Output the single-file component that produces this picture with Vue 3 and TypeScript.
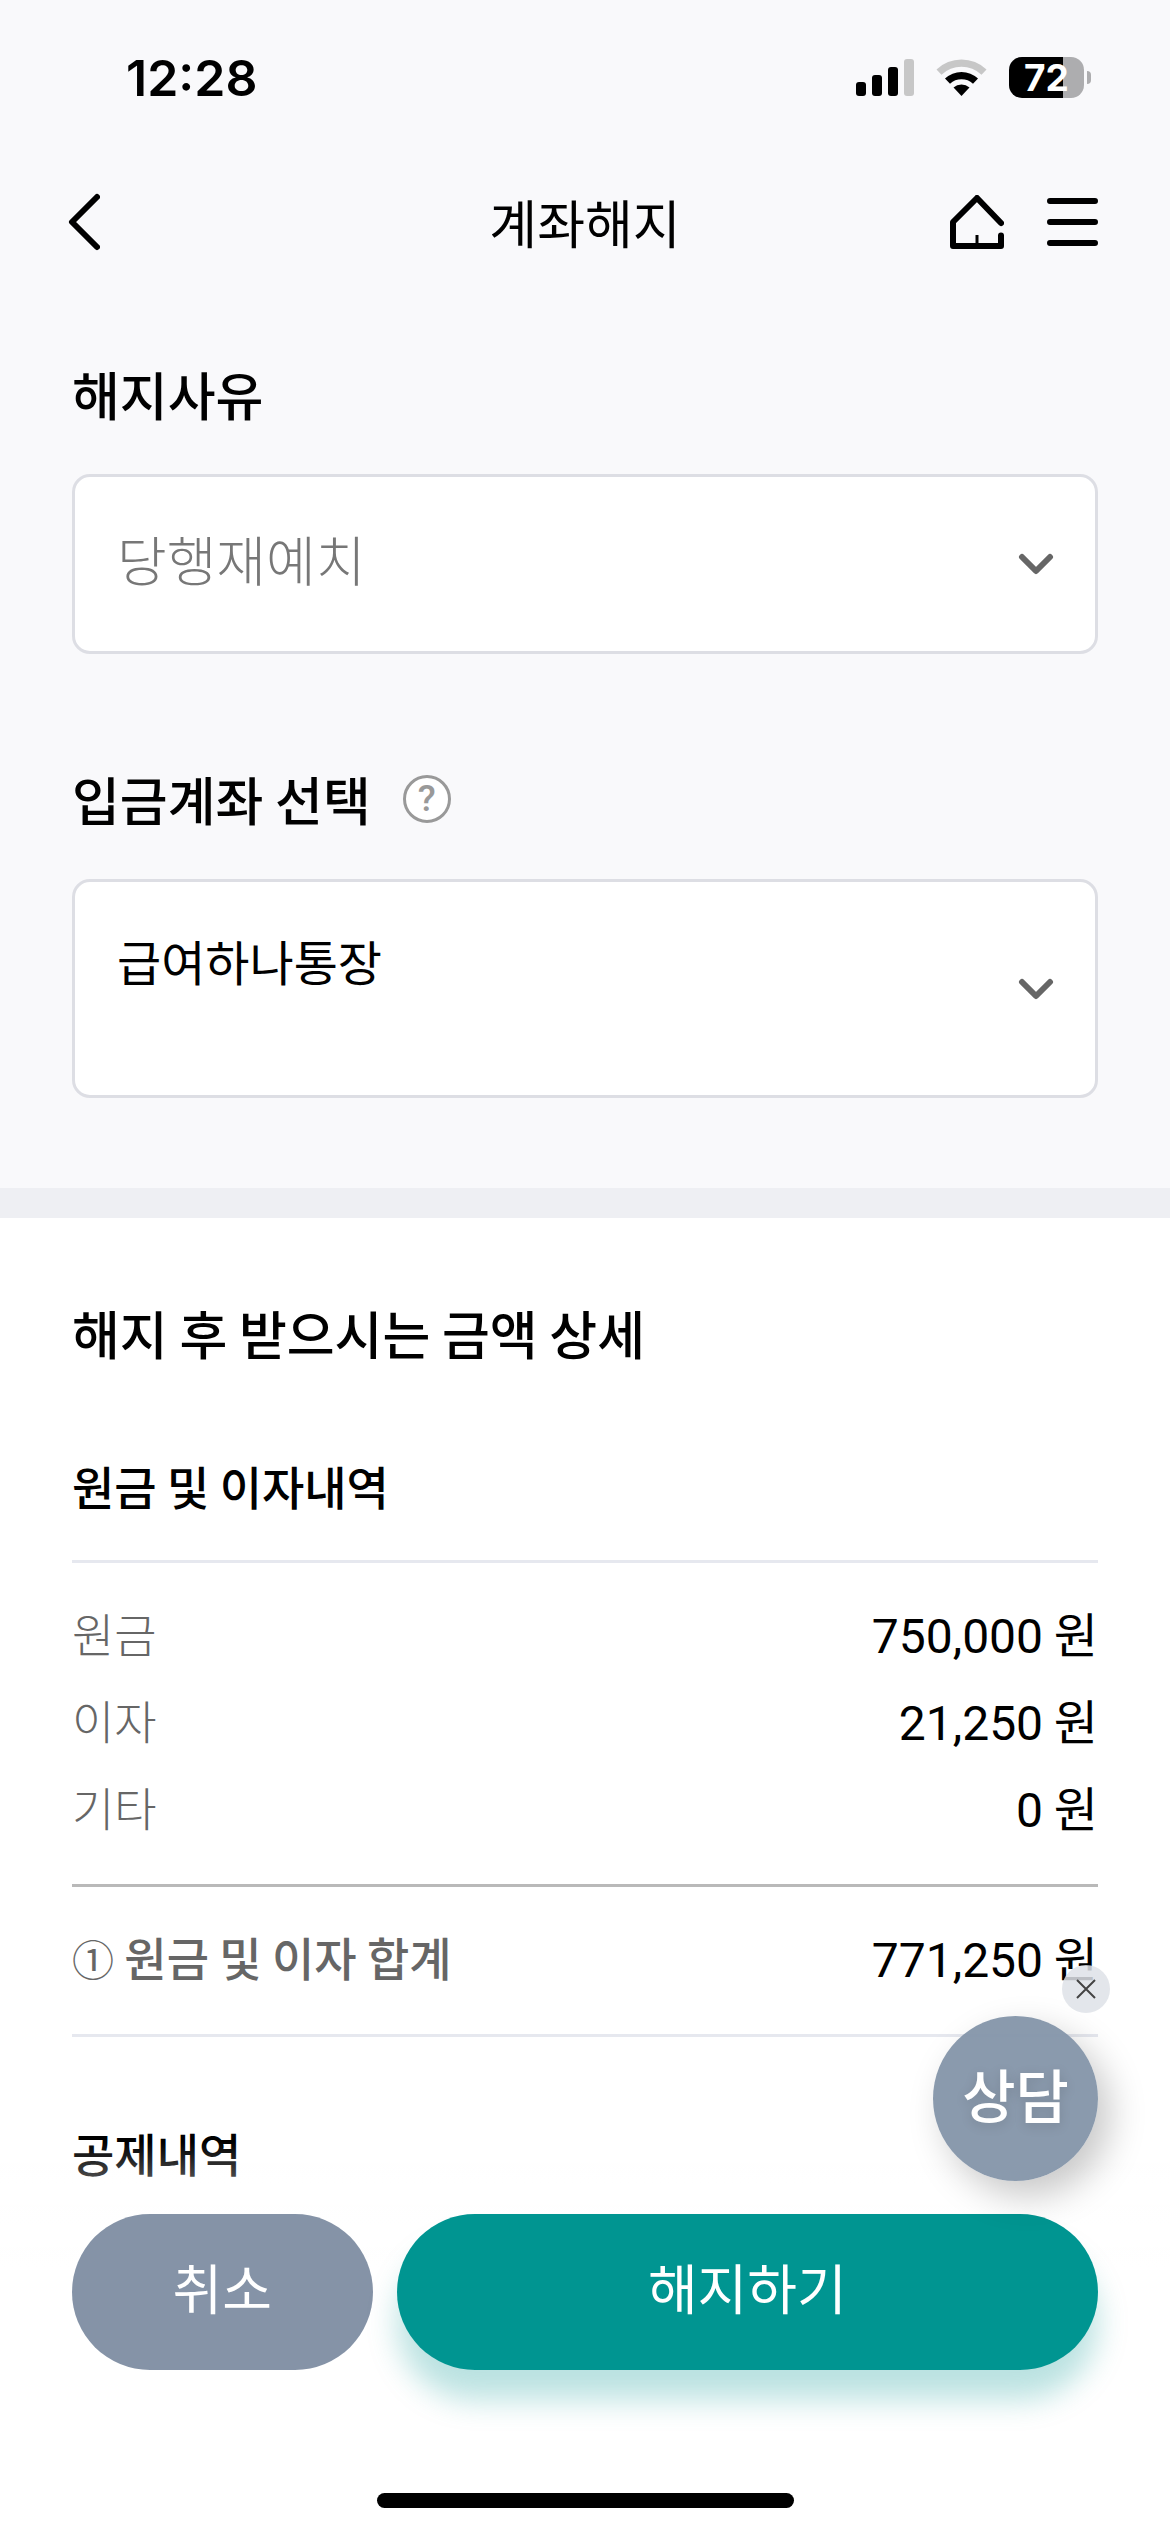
<script setup lang="ts">
import { ref } from 'vue'

interface AmountRow {
  label: string
  amount: number
}

const reason = ref('당행재예치')
const account = ref('급여하나통장')
const showConsult = ref(true)

const rows: AmountRow[] = [
  { label: '원금', amount: 750000 },
  { label: '이자', amount: 21250 },
  { label: '기타', amount: 0 },
]
const total = rows.reduce((sum, row) => sum + row.amount, 0)

const format = (value: number): string => value.toLocaleString('en-US')
</script>

<template>
  <div class="page">
    <div class="status-bar">
      <span class="time">12:28</span>
      <div class="status-icons">
        <svg width="58" height="38" viewBox="0 0 58 38" aria-hidden="true">
          <rect x="0" y="23" width="10" height="14" rx="3" />
          <rect x="16" y="16" width="10" height="21" rx="3" />
          <rect x="32" y="8" width="10" height="29" rx="3" />
          <rect x="48" y="0" width="10" height="37" rx="3" fill="#c7c7c7" />
        </svg>
        <svg width="51" height="38" viewBox="0 0 51 38" aria-hidden="true">
          <path d="M0.5 10.5 A36 36 0 0 1 50.5 10.5 L45.500 15.700 A29 29 0 0 0 5.500 15.700 Z" fill="#c7c7c7" />
          <path d="M9 19.500 A24 24 0 0 1 42 19.500 L37 24.700 A17 17 0 0 0 14 24.700 Z" />
          <path d="M17.500 28.500 A12 12 0 0 1 33.500 28.500 L25.500 37 Z" />
        </svg>
        <div class="battery">
          <div class="battery-body"><span>72</span></div>
          <i class="battery-tip"></i>
        </div>
      </div>
    </div>

    <header class="app-bar">
      <button class="icon-button" type="button" aria-label="뒤로">
        <svg width="34" height="60" viewBox="0 0 34 60" aria-hidden="true">
          <path d="M31 5 L6 30 L31 55" class="stroke" />
        </svg>
      </button>
      <h1>계좌해지</h1>
      <div class="app-actions">
        <button class="icon-button" type="button" aria-label="홈">
          <svg width="54" height="54" viewBox="0 0 54 54" aria-hidden="true">
            <path d="M51 28 L27 3 L3 27 V51 H51 V40.500" class="stroke" />
            <path d="M27 40 V50" stroke="#000" stroke-width="3" />
          </svg>
        </button>
        <button class="icon-button" type="button" aria-label="메뉴">
          <svg width="51" height="54" viewBox="0 0 51 54" aria-hidden="true">
            <path d="M3 6 H48 M3 27 H48 M3 48 H48" class="stroke" />
          </svg>
        </button>
      </div>
    </header>

    <section class="form">
      <div class="field">
        <div class="field-head"><label for="reason">해지사유</label></div>
        <div class="select-box">
          <select id="reason" v-model="reason" class="reason">
            <option>당행재예치</option>
          </select>
          <svg class="chevron" width="36" height="22" viewBox="0 0 36 22" aria-hidden="true">
            <path d="M4 4 L18 18 L32 4" />
          </svg>
        </div>
      </div>
      <div class="field">
        <div class="field-head">
          <label for="account">입금계좌 선택</label>
          <button class="help" type="button" aria-label="도움말">?</button>
        </div>
        <div class="select-box">
          <select id="account" v-model="account" class="account">
            <option>급여하나통장</option>
          </select>
          <svg class="chevron" width="36" height="22" viewBox="0 0 36 22" aria-hidden="true">
            <path d="M4 4 L18 18 L32 4" />
          </svg>
        </div>
      </div>
    </section>

    <main class="details">
      <h2>해지 후 받으시는 금액 상세</h2>
      <h3>원금 및 이자내역</h3>
      <table>
        <tbody>
          <tr v-for="row in rows" :key="row.label">
            <th scope="row">{{ row.label }}</th>
            <td><span class="amount">{{ format(row.amount) }}</span> 원</td>
          </tr>
        </tbody>
        <tfoot>
          <tr>
            <th scope="row"><span class="mark">①</span> 원금 및 이자 합계</th>
            <td><span class="amount">{{ format(total) }}</span> 원</td>
          </tr>
        </tfoot>
      </table>
      <h3>공제내역</h3>
    </main>

    <div class="bottom-bar">
      <div class="actions">
        <button class="cancel" type="button">취소</button>
        <button class="submit" type="button">해지하기</button>
      </div>
      <div class="home-indicator"></div>
    </div>

    <div v-if="showConsult" class="consult">
      <button class="consult-button" type="button">상담</button>
      <button class="consult-close" type="button" aria-label="닫기" @click="showConsult = false">
        <svg width="20" height="20" viewBox="0 0 20 20" aria-hidden="true">
          <path d="M1 1 L19 19 M19 1 L1 19" stroke="#444" stroke-width="2" />
        </svg>
      </button>
    </div>
  </div>
</template>

<style>
body {
  margin: 0;
  background: #fff;
}
</style>

<style scoped>
.page {
  box-sizing: border-box;
  min-height: 100vh;
  padding-bottom: 340px;
  background: #fff;
  color: #000;
  font-family: "Noto Sans CJK KR", sans-serif;
}

button,
select {
  margin: 0;
  padding: 0;
  border: 0;
  background: none;
  color: inherit;
  font: inherit;
  font-family: Roboto, "Noto Sans CJK KR", sans-serif;
}

button {
  cursor: pointer;
}

svg {
  display: block;
}

h1,
h2,
h3 {
  margin: 0;
}

.status-bar,
.app-bar,
.form {
  background: #f9f9fb;
}

.status-bar {
  display: flex;
  align-items: center;
  justify-content: space-between;
  box-sizing: border-box;
  height: 141px;
  padding: 14px 79px 0 126px;
}

.time {
  font: 600 50px/60px Inter, sans-serif;
}

.status-icons {
  display: flex;
  align-items: center;
  gap: 22px;
}

.battery {
  display: flex;
  align-items: center;
  gap: 3px;
}

.battery-body {
  width: 75px;
  border-radius: 13px;
  background: linear-gradient(90deg, #000 72%, #adadaf 72%);
  color: #fff;
  font: 700 37px/41px Inter, sans-serif;
  text-align: center;
}

.battery-tip {
  width: 4px;
  height: 13px;
  border-radius: 0 4px 4px 0;
  background: #adadaf;
}

.app-bar {
  display: grid;
  grid-template-columns: 1fr auto 1fr;
  align-items: center;
  height: 162px;
  padding: 0 66px;
}

.app-bar .icon-button {
  justify-self: start;
}

.app-bar h1 {
  font-size: 52px;
  font-weight: 400;
  line-height: 78px;
}

.app-actions {
  display: flex;
  justify-content: flex-end;
  gap: 43px;
  padding-right: 6px;
}

.stroke {
  fill: none;
  stroke: #000;
  stroke-width: 6;
  stroke-linecap: round;
  stroke-linejoin: round;
}

.form {
  display: flex;
  flex-direction: column;
  gap: 106px;
  padding: 52px 72px 90px;
  border-bottom: 30px solid #eeeff3;
}

.field-head {
  display: flex;
  align-items: center;
  gap: 32px;
  margin-bottom: 41px;
  font-size: 52px;
  font-weight: 500;
  line-height: 78px;
}

.help {
  box-sizing: border-box;
  width: 48px;
  height: 48px;
  border: 3px solid #999;
  border-radius: 50%;
  background: #fff;
  color: #999;
  font-size: 37px;
  font-weight: 500;
  line-height: 42px;
}

.select-box {
  display: grid;
  align-items: center;
}

.select-box > * {
  grid-area: 1 / 1;
}

.select-box select {
  box-sizing: border-box;
  width: 100%;
  border: 3px solid #dddee4;
  border-radius: 18px;
  background: #fff;
  appearance: none;
}

.select-box .reason {
  padding: 48px 120px 48px 42px;
  color: #777;
  font-size: 54px;
  font-weight: 300;
  line-height: 78px;
}

.select-box .account {
  padding: 50px 120px 97px 42px;
  font-size: 48px;
  line-height: 66px;
}

.chevron {
  justify-self: end;
  margin-right: 44px;
  fill: none;
  stroke: #666;
  stroke-width: 6;
  stroke-linecap: round;
  stroke-linejoin: round;
  pointer-events: none;
}

.details {
  padding: 76px 72px 0;
}

.details h2 {
  margin-bottom: 80px;
  font-size: 52px;
  font-weight: 500;
  line-height: 78px;
}

.details h3 {
  font-size: 46px;
  font-weight: 500;
  line-height: 66px;
}

table {
  width: 100%;
  margin: 42px 0 82px;
  border-top: 3px solid #e6e8ef;
  border-bottom: 3px solid #e6e8ef;
  border-spacing: 0;
}

th,
td {
  padding: 0;
  line-height: 87px;
}

th {
  color: #666;
  font-size: 46px;
  font-weight: 300;
  text-align: left;
}

td {
  font-size: 48px;
  text-align: right;
}

.amount {
  font-family: Roboto, sans-serif;
  line-height: 48px;
}

tr:first-child > * {
  padding-top: 26px;
}

tr:last-child > * {
  padding-bottom: 34px;
}

tfoot tr > * {
  border-top: 3px solid #b9b9b9;
}

tfoot th {
  font-weight: 500;
}

.mark {
  font-size: 42px;
  font-weight: 400;
  line-height: 48px;
}

.bottom-bar {
  position: fixed;
  right: 0;
  bottom: 0;
  left: 0;
  padding: 72px 72px 24px;
  background: linear-gradient(rgba(255, 255, 255, 0), #fff 126px);
}

.actions {
  display: flex;
  gap: 24px;
}

.actions button {
  height: 156px;
  border-radius: 78px;
  color: #fff;
  font-size: 54px;
  line-height: 78px;
}

.actions .cancel {
  flex: 3 1 0;
  background: #8593a7;
}

.actions .submit {
  flex: 7 1 0;
  background: #009591;
  box-shadow: 0 30px 30px rgba(0, 149, 145, 0.27);
}

.home-indicator {
  width: 417px;
  height: 15px;
  margin: 123px auto 0;
  border-radius: 8px;
  background: #000;
}

.consult {
  position: fixed;
  right: 72px;
  bottom: 351px;
}

.consult-button {
  display: block;
  width: 165px;
  height: 165px;
  border-radius: 50%;
  background: rgba(133, 150, 170, 0.96);
  box-shadow: 12px 15px 36px rgba(0, 0, 0, 0.22);
  color: #fff;
  font-size: 58px;
  font-weight: 500;
  line-height: 165px;
  text-shadow: 0 3px 12px rgba(0, 0, 0, 0.15);
}

.consult-close {
  position: absolute;
  top: -51px;
  right: -12px;
  display: flex;
  align-items: center;
  justify-content: center;
  width: 48px;
  height: 48px;
  border-radius: 50%;
  background: rgba(222, 226, 232, 0.85);
}
</style>
